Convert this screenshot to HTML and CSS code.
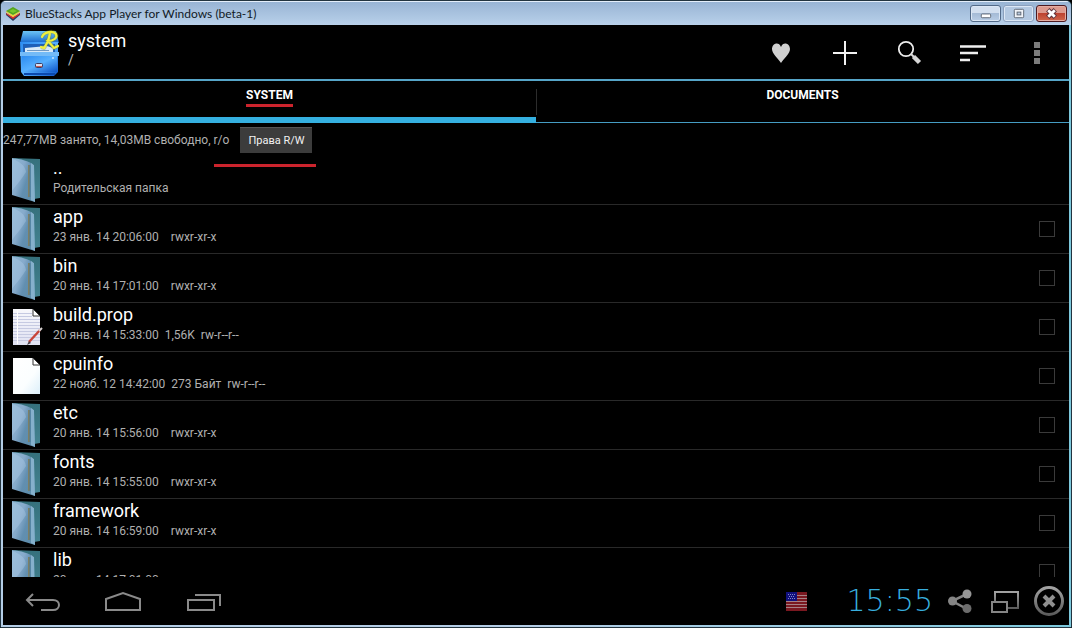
FILE: index.html
```html
<!DOCTYPE html>
<html lang="ru">
<head>
<meta charset="utf-8">
<title>BlueStacks App Player for Windows (beta-1)</title>
<link rel="stylesheet" href="styles.css">
</head>
<body>
<svg class="defs" aria-hidden="true">
  <defs>
    <linearGradient id="gFront" x1="0" y1="0.2" x2="1" y2="0.8"><stop offset="0" stop-color="#8cb4d2"/><stop offset=".35" stop-color="#86aacb"/><stop offset=".6" stop-color="#628fb0"/><stop offset="1" stop-color="#5c8caa"/></linearGradient>
    <linearGradient id="gBack" x1="0" y1="0" x2="0" y2="1"><stop offset="0" stop-color="#35707c"/><stop offset="1" stop-color="#448391"/></linearGradient>
    <linearGradient id="gPage" x1="0" y1="0" x2="1" y2="1"><stop offset="0" stop-color="#fff"/><stop offset=".6" stop-color="#fbfeff"/><stop offset="1" stop-color="#dceffa"/></linearGradient>
    <linearGradient id="gNote" x1="0" y1="0" x2="0" y2="1"><stop offset="0" stop-color="#f8f8fc"/><stop offset="1" stop-color="#dfe1f2"/></linearGradient>
    <linearGradient id="gCab" x1="0" y1="0" x2="1" y2="1"><stop offset="0" stop-color="#2d8cf0"/><stop offset=".5" stop-color="#56b0ff"/><stop offset="1" stop-color="#0d54c8"/></linearGradient>
    <linearGradient id="gTop" x1="0" y1="0" x2="0" y2="1"><stop offset="0" stop-color="#6cc4f4"/><stop offset="1" stop-color="#1768cf"/></linearGradient>
    <linearGradient id="gGrey" x1="0" y1="0" x2="0" y2="1"><stop offset="0" stop-color="#a2a2a2"/><stop offset="1" stop-color="#5c5c5c"/></linearGradient>
    <symbol id="folder" viewBox="0 0 32 46">
      <path d="M1 1 29 2V41L23 42V8Z" fill="url(#gBack)"/>
      <path d="M1 1C10 2 18 4 22 8L24 45 1 38Z" fill="url(#gFront)"/>
      <path d="M1 2C8 4 14 8 15 15C11 22 5 28 1 34Z" fill="#b4d2ec" opacity=".35"/>
      <path d="M18 8V40" stroke="#7c7f66" stroke-width="2"/>
      <path d="M19 8V40" stroke="#4d7f99" stroke-width="1"/>
      <path d="M20 6 23 8 24 45 20 43Z" fill="#85b0cc"/>
    </symbol>
    <symbol id="page" viewBox="0 0 32 46">
      <path d="M2 5H22L29 12V41H2Z" fill="url(#gPage)"/>
      <path d="M22 5V12H29Z" fill="#fff" stroke="#333" stroke-width="1"/>
    </symbol>
    <symbol id="note" viewBox="0 0 32 46">
      <path d="M2 5H22L29 12V41H2Z" fill="url(#gNote)"/>
      <path d="M2 9.500H21M2 12.500H21M2 15.500H29M2 18.500H29M2 21.500H29M2 24.500H29M2 27.500H29M2 30.500H29M2 33.500H29M2 36.500H29" stroke="#c6cae2" stroke-width="1"/>
      <path d="M6.500 6V40" stroke="#fff" stroke-width="1"/>
      <path d="M22 5V12H29Z" fill="#fff" stroke="#333" stroke-width="1"/>
      <path d="M18 38 29 26" stroke="#c8443a" stroke-width="2.400"/>
      <path d="M28 27 31 24" stroke="#d8d2d2" stroke-width="2"/>
      <path d="M16 41 18 37 20 39Z" fill="#4a4048"/>
    </symbol>
  </defs>
</svg>
<div class="window">
  <header class="titlebar">
    <svg class="titlebar-logo" viewBox="0 0 16 16" aria-hidden="true">
      <path d="M1 9 8 15 15 9V7L8 12 1 7Z" fill="#2b3d63"/>
      <path d="M1 8 8 13 15 8V7L8 11 1 7Z" fill="#e03024"/>
      <path d="M1 6 8 11 15 6V5L8 9 1 5Z" fill="#f5d32c"/>
      <path d="M1 5 8 1 15 5 8 9Z" fill="#55a51c"/>
      <path d="M4 5 8 3 12 5 8 7Z" fill="#76c52c"/>
    </svg>
    <span class="titlebar-text">BlueStacks App Player for Windows (beta-1)</span>
    <div class="window-buttons">
      <button class="win-btn" type="button" aria-label="Minimize"><svg viewBox="0 0 28 16"><rect x="9.500" y="8.500" width="10" height="4" rx="1" fill="#fff" stroke="#5c6572"/></svg></button>
      <button class="win-btn win-btn-faded" type="button" aria-label="Maximize"><svg viewBox="0 0 28 16"><rect x="9.500" y="3.500" width="10" height="9" rx="1" fill="#f1f4f9" stroke="#5c6572"/><rect x="12.500" y="6.500" width="4" height="3" fill="#b9cbe2" stroke="#5c6572"/></svg></button>
      <button class="win-btn win-btn-close" type="button" aria-label="Close"><svg viewBox="0 0 28 16"><path d="M10 4 18 12M18 4 10 12" stroke="#5b3038" stroke-width="5"/><path d="M10.500 4.500 17.500 11.500M17.500 4.500 10.500 11.500" stroke="#fff" stroke-width="3"/></svg></button>
    </div>
  </header>

  <main class="screen">
    <div class="appbar">
      <svg class="app-icon" viewBox="0 0 42 48" aria-hidden="true">
        <path d="M4 2H37L40 14H1Z" fill="url(#gTop)"/>
        <path d="M1 13H39V43L35 47H5L2 43Z" fill="url(#gCab)"/>
        <path d="M4 15H36V24H4Z" fill="#1d5fb8"/>
        <path d="M6 19 28 17 34 19V23H6Z" fill="#d9eaf8"/>
        <path d="M8 21.500H30" stroke="#7099c4"/>
        <path d="M1 23H40V27H1Z" fill="#74bbf7"/>
        <path d="M3 27H38V43H3Z" fill="url(#gCab)"/>
        <path d="M5 45H36" stroke="#0b49ae" stroke-width="2"/>
        <rect x="16.500" y="34.500" width="7" height="4" rx="1" fill="#d9dff0" stroke="#3a3d63"/>
        <path d="M17 37.500H23" stroke="#c65a53"/>
        <circle cx="34" cy="29" r="1" fill="#c9e4ff"/>
        <path d="M23 8C25 3 34 1 37 5C39 9 34 12 29 12L35 19L39 17M31 4C30 10 28 15 25 19L22 18" fill="none" stroke="#7c8f20" stroke-width="4" opacity=".4"/>
        <path d="M23 8C25 3 34 1 37 5C39 9 34 12 29 12L35 19L39 17M31 4C30 10 28 15 25 19L22 18" fill="none" stroke="#f0f03c" stroke-width="2.200" stroke-linecap="round"/>
      </svg>
      <div class="app-heading">
        <h1 class="app-title">system</h1>
        <div class="app-path">/</div>
      </div>
      <div class="actions">
        <button class="action" type="button" aria-label="Favorites"><svg viewBox="0 0 32 32"><path d="M16 26C13 21 7 17 7 12C7 6 14 4 16 10C18 4 25 6 25 12C25 17 19 21 16 26Z" fill="#d0d0d0"/></svg></button>
        <button class="action" type="button" aria-label="Add"><svg viewBox="0 0 32 32"><path d="M16 4V28M4 16H28" stroke="#f2f2f2" stroke-width="2"/></svg></button>
        <button class="action" type="button" aria-label="Search"><svg viewBox="0 0 32 32"><circle cx="13" cy="12" r="7.200" fill="none" stroke="#ececec" stroke-width="1.800"/><path d="M18 17 21 20" stroke="#ddd" stroke-width="2"/><path d="M20.500 19.500 26.500 25.500" stroke="#d6d6d6" stroke-width="4.500"/></svg></button>
        <button class="action" type="button" aria-label="Sort"><svg viewBox="0 0 32 32"><path d="M3 9.500H29M3 16H21M3 23H13" stroke="#efefef" stroke-width="2.600"/></svg></button>
        <button class="action" type="button" aria-label="More"><svg viewBox="0 0 32 32"><path d="M13 5H19V11H13ZM13 13H19V19H13ZM13 21H19V27H13Z" fill="#7c7c7c"/></svg></button>
      </div>
    </div>

    <nav class="tabs">
      <button class="tab tab-active" type="button"><span class="tab-label">SYSTEM</span></button>
      <button class="tab" type="button"><span class="tab-label">DOCUMENTS</span></button>
    </nav>

    <div class="storage">
      <span>247,77MB занято, 14,03MB свободно, r/o</span>
      <div class="rights"><button class="rights-btn" type="button">Права R/W</button><i class="rights-mark"></i></div>
    </div>

    <ul class="files">
      <li class="file"><svg class="file-icon"><use href="#folder"/></svg><div class="file-body"><div class="file-name">..</div><div class="file-meta"><span>Родительская папка</span></div></div></li>
      <li class="file"><svg class="file-icon"><use href="#folder"/></svg><div class="file-body"><label class="file-name" for="f1">app</label><div class="file-meta"><span>23 янв. 14 20:06:00</span><span></span><span>rwxr-xr-x</span></div></div><input class="file-check" type="checkbox" id="f1"></li>
      <li class="file"><svg class="file-icon"><use href="#folder"/></svg><div class="file-body"><label class="file-name" for="f2">bin</label><div class="file-meta"><span>20 янв. 14 17:01:00</span><span></span><span>rwxr-xr-x</span></div></div><input class="file-check" type="checkbox" id="f2"></li>
      <li class="file"><svg class="file-icon"><use href="#note"/></svg><div class="file-body"><label class="file-name" for="f3">build.prop</label><div class="file-meta"><span>20 янв. 14 15:33:00</span><span>1,56K</span><span>rw-r--r--</span></div></div><input class="file-check" type="checkbox" id="f3"></li>
      <li class="file"><svg class="file-icon"><use href="#page"/></svg><div class="file-body"><label class="file-name" for="f4">cpuinfo</label><div class="file-meta"><span>22 нояб. 12 14:42:00</span><span>273 Байт</span><span>rw-r--r--</span></div></div><input class="file-check" type="checkbox" id="f4"></li>
      <li class="file"><svg class="file-icon"><use href="#folder"/></svg><div class="file-body"><label class="file-name" for="f5">etc</label><div class="file-meta"><span>20 янв. 14 15:56:00</span><span></span><span>rwxr-xr-x</span></div></div><input class="file-check" type="checkbox" id="f5"></li>
      <li class="file"><svg class="file-icon"><use href="#folder"/></svg><div class="file-body"><label class="file-name" for="f6">fonts</label><div class="file-meta"><span>20 янв. 14 15:55:00</span><span></span><span>rwxr-xr-x</span></div></div><input class="file-check" type="checkbox" id="f6"></li>
      <li class="file"><svg class="file-icon"><use href="#folder"/></svg><div class="file-body"><label class="file-name" for="f7">framework</label><div class="file-meta"><span>20 янв. 14 16:59:00</span><span></span><span>rwxr-xr-x</span></div></div><input class="file-check" type="checkbox" id="f7"></li>
      <li class="file"><svg class="file-icon"><use href="#folder"/></svg><div class="file-body"><label class="file-name" for="f8">lib</label><div class="file-meta"><span>20 янв. 14 17:01:00</span></div></div><input class="file-check" type="checkbox" id="f8"></li>
    </ul>

    <footer class="navbar">
      <div class="nav-keys">
        <button class="nav-key" type="button" aria-label="Back"><svg viewBox="0 0 40 32"><path d="M10 9 4 15 10 21M4 15H30C38 15 38 25 30 25H18" fill="none" stroke="#8a8a8a" stroke-width="2"/></svg></button>
        <button class="nav-key" type="button" aria-label="Home"><svg viewBox="0 0 40 32"><path d="M3 25V14L20 8 37 14V25Z" fill="none" stroke="#8a8a8a" stroke-width="2"/></svg></button>
        <button class="nav-key" type="button" aria-label="Recent apps"><svg viewBox="0 0 40 32"><path d="M5 15H31V25H5ZM12 10H37V21" fill="none" stroke="#8a8a8a" stroke-width="2"/></svg></button>
      </div>
      <div class="tray">
        <svg class="flag" viewBox="0 0 21 19" role="img" aria-label="English (US)"><path d="M0 0H21V19H0Z" fill="#7a1820"/><path d="M0 3.500H21M0 6.500H21M0 9.500H21M0 12.500H21M0 15.500H21" stroke="#a58085" stroke-width="1.200"/><path d="M0 0H11V9H0Z" fill="#10107c"/><path d="M2 2.500H10M3 4.500H9M2 6.500H10" stroke="#8585c4" stroke-dasharray="1 1"/></svg>
        <time class="clock">15:55</time>
        <button class="tray-btn" type="button" aria-label="Share"><svg viewBox="0 0 32 32"><path d="M22 9 7 16 22 24" fill="none" stroke="#858585" stroke-width="2.500"/><circle cx="22" cy="9" r="4.500" fill="#969696"/><circle cx="7.500" cy="16" r="4.500" fill="#858585"/><circle cx="22" cy="23.500" r="4.500" fill="#6c6c6c"/></svg></button>
        <button class="tray-btn" type="button" aria-label="Windows"><svg viewBox="0 0 32 32"><path d="M6 16V7H29V23H18" fill="none" stroke="url(#gGrey)" stroke-width="2"/><rect x="3" y="17" width="15" height="10" fill="none" stroke="#858585" stroke-width="2"/></svg></button>
        <button class="tray-btn" type="button" aria-label="Close app"><svg viewBox="0 0 32 32"><circle cx="16" cy="16" r="13.500" fill="none" stroke="url(#gGrey)" stroke-width="3"/><path d="M11 11 21 21M21 11 11 21" stroke="#909090" stroke-width="4"/></svg></button>
      </div>
    </footer>
  </main>
</div>
</body>
</html>
```
FILE: styles.css
```css
* { box-sizing: border-box; }
html, body { height: 100%; margin: 0; background: #000; }
button { padding: 0; border: 0; background: none; color: inherit; font: inherit; }
svg { display: block; }
.defs { position: absolute; width: 0; height: 0; }

.window {
  display: flex;
  flex-direction: column;
  height: 100vh;
  padding: 0 2px 2px;
  background: linear-gradient(90deg, #b4cde6, #b4cde6 50%, #7cc8dc);
  border: 1px solid #22343f;
  border-radius: 6px 6px 0 0;
  overflow: hidden;
  font-family: Roboto, "Open Sans", sans-serif;
}

.titlebar {
  display: flex;
  flex: none;
  align-items: center;
  height: 24px;
  margin: 0 -2px;
  padding: 0 4px;
  gap: 4px;
  border-top: 1px solid #e4eefa;
  background: linear-gradient(#98b4d4, #b9d1ea);
}
.titlebar-logo { width: 16px; height: 16px; }
.titlebar-text { flex: 1; color: #111a26; font: 12px/16px Lato, "Open Sans", sans-serif; }
.window-buttons { display: flex; gap: 2px; }
.win-btn {
  width: 31px;
  height: 17px;
  border: 1px solid #526a88;
  border-radius: 3px;
  background: linear-gradient(#d2dfef 45%, #a5bbd6 50%, #b9cee6);
  box-shadow: inset 0 0 0 1px #dbe7f5;
}
.win-btn svg { width: 100%; height: 100%; }
.win-btn-faded { border-color: #8ba0bd; background: #b4c9e2; }
.win-btn-close {
  border-color: #4d1a20;
  background: linear-gradient(#dd9a8e 45%, #bd4330 50%, #d0674c);
  box-shadow: inset 0 0 0 1px #e5ada2;
}

.screen { display: flex; flex: 1; flex-direction: column; min-height: 0; background: #000; color: #fff; }

.appbar { display: flex; flex: none; height: 56px; padding: 4px 16px 2px; border-bottom: 2px solid #56a5c8; }
.app-icon { width: 42px; height: 48px; }
.app-heading { flex: 1; padding: 2px 0 0 7px; }
.app-title { margin: 0; font-size: 18px; font-weight: 400; line-height: 20px; }
.app-path { color: #bbb; font-size: 14px; line-height: 18px; }
.actions { display: flex; align-items: center; gap: 32px; }
.action svg { width: 32px; height: 32px; }

.tabs { display: flex; flex: none; height: 42px; }
.tab { position: relative; display: flex; flex: 1; align-items: flex-start; justify-content: center; padding-top: 6px; border-bottom: 1px solid #459cc2; font-size: 12px; font-weight: 700; line-height: 16px; }
.tab + .tab::before { content: ""; position: absolute; left: 0; top: 8px; width: 1px; height: 26px; background: #2c2c2c; }
.tab-active { border-bottom: 6px solid #35b0e0; }
.tab-active .tab-label { padding-bottom: 1px; border-bottom: 3px solid #cc242d; }

.storage { display: flex; flex: none; align-items: center; gap: 11px; height: 33px; color: #b0b0b0; font-size: 12px; }
.rights { position: relative; }
.rights-btn { height: 26px; padding: 0 8px; border-top: 1px solid #555; background: #3c3c3c; color: #f2f2f2; font-size: 11px; }
.rights-mark { position: absolute; z-index: 1; left: -26px; right: -4px; top: 37px; height: 3px; background: #cc242d; }

.files { flex: 1; min-height: 0; margin: 0; padding: 0; overflow: hidden; list-style: none; }
.file { display: flex; height: 49px; padding: 0 14px 0 8px; border-bottom: 1px solid #292929; }
.file-icon { flex: none; width: 32px; height: 46px; margin-top: 1px; }
.file-body { flex: 1; padding: 1px 0 0 10px; }
.file-name { display: block; margin-bottom: 1px; font-size: 18px; line-height: 22px; }
.file-meta { display: flex; gap: 6px; color: #b0b0b0; font-size: 12px; line-height: 16px; }
.file-check { appearance: none; align-self: center; width: 16px; height: 16px; margin: 0; border: 1px solid #3a3a3a; }

.navbar { display: flex; flex: none; align-items: center; justify-content: space-between; height: 48px; padding: 0 4px 0 20px; }
.nav-keys { display: flex; gap: 40px; }
.nav-key svg { width: 40px; height: 32px; }
.tray { display: flex; align-items: center; gap: 12px; }
.flag { width: 21px; height: 19px; margin-right: 28px; }
.clock { color: #38aede; font: 200 30px/32px "DejaVu Sans", sans-serif; }
.tray-btn svg { width: 32px; height: 32px; }
```
